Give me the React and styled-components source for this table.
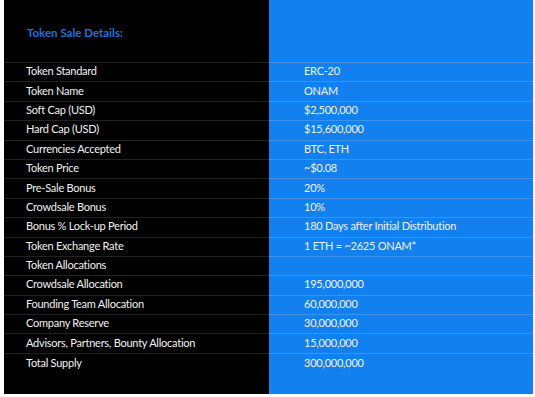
import React from "react";
import styled, { createGlobalStyle } from "styled-components";

const Global = createGlobalStyle`
  html, body { margin: 0; padding: 0; background: #ffffff; }
  body { font-family: Lato, "Open Sans", sans-serif; }
`;

const Panel = styled.div`
  margin: 0 2px 0 4px;
  width: 529px;
  height: 394px;
  display: grid;
  grid-template-columns: 265px 264px;
  grid-auto-rows: min-content;
  align-content: start;
  background: linear-gradient(to right, #000 265px, #1380ef 265px);
`;

const Cell = styled.div`
  box-sizing: border-box;
  height: ${(p) => (p.$head ? "63px" : "19.4px")};
  border-bottom: ${(p) => (p.$last ? "none" : `1px solid ${p.$side === "right" ? "#3a93ef" : "#222"}`)};
  display: flex;
  align-items: center;
  padding-left: ${(p) => (p.$side === "right" ? "35px" : "22px")};
  padding-bottom: 3px;
  color: #f2f2f2;
  font-size: 11px;
  letter-spacing: -0.25px;
  white-space: nowrap;
`;

const Title = styled.span`
  color: #1c73d6;
  font-weight: 700;
  font-size: 11.5px;
  letter-spacing: 0;
  padding-left: 1px;
  padding-top: 5px;
`;

const rows = [
  ["Token Standard", "ERC-20"],
  ["Token Name", "ONAM"],
  ["Soft Cap (USD)", "$2,500,000"],
  ["Hard Cap (USD)", "$15,600,000"],
  ["Currencies Accepted", "BTC, ETH"],
  ["Token Price", "~$0.08"],
  ["Pre-Sale Bonus", "20%"],
  ["Crowdsale Bonus", "10%"],
  ["Bonus % Lock-up Period", "180 Days after Initial Distribution"],
  ["Token Exchange Rate", "1 ETH = ~2625 ONAM*"],
  ["Token Allocations", ""],
  ["Crowdsale Allocation", "195,000,000"],
  ["Founding Team Allocation", "60,000,000"],
  ["Company Reserve", "30,000,000"],
  ["Advisors, Partners, Bounty Allocation", "15,000,000"],
  ["Total Supply", "300,000,000"],
];

export default function App() {
  return (
    <>
      <Global />
      <Panel>
        <Cell $head $side="left">
          <Title>Token Sale Details:</Title>
        </Cell>
        <Cell $head $side="right" />
        {rows.map(([k, v], i) => {
          const last = i === rows.length - 1;
          return (
            <React.Fragment key={k}>
              <Cell $side="left" $last={last}>{k}</Cell>
              <Cell $side="right" $last={last}>{v}</Cell>
            </React.Fragment>
          );
        })}
      </Panel>
    </>
  );
}
